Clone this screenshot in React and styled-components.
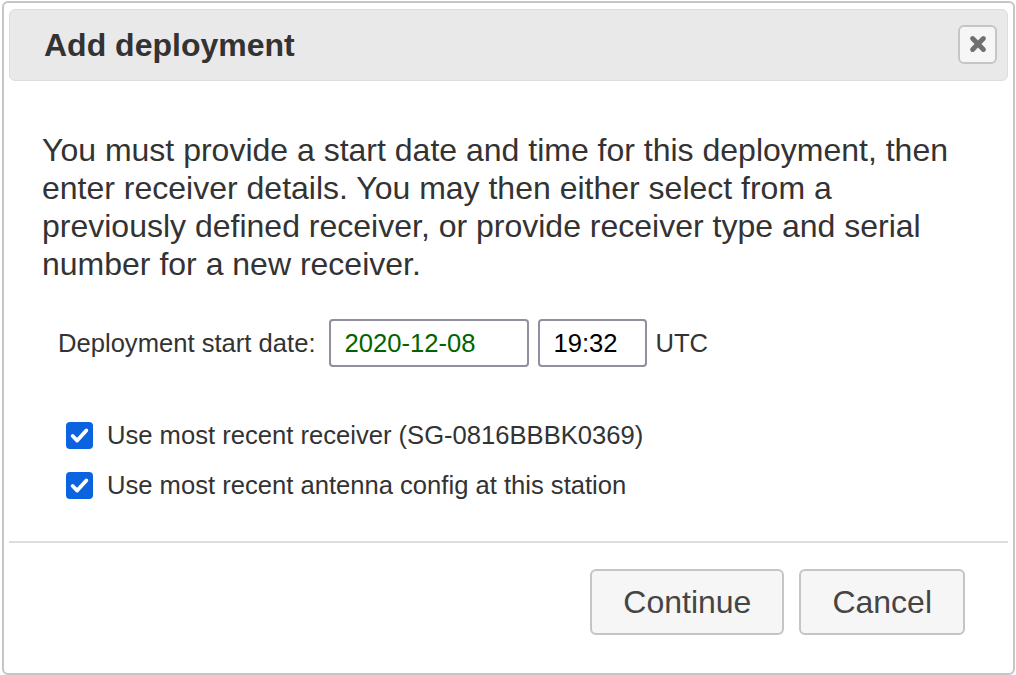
import React from "react";
import styled, { createGlobalStyle } from "styled-components";

const Global = createGlobalStyle`
  html, body { margin: 0; padding: 0; background: #fff; }
  body { font-family: "Liberation Sans", Arial, sans-serif; color: #333; }
`;

const Dialog = styled.div`
  box-sizing: border-box;
  margin: 1px 2px 0 2px;
  width: 1013px;
  height: 674px;
  border: 2px solid #c5c5c5;
  border-radius: 6px;
  padding: 6px 5px;
  display: flex;
  flex-direction: column;
  background: #fff;
`;

const TitleBar = styled.div`
  box-sizing: border-box;
  height: 72px;
  border: 1px solid #dddddd;
  border-radius: 6px;
  background: #e9e9e9;
  display: flex;
  align-items: center;
  justify-content: space-between;
  padding: 0 10px 0 34px;
`;

const Title = styled.span`
  font-size: 32px;
  font-weight: bold;
  color: #333;
`;

const CloseButton = styled.button`
  box-sizing: border-box;
  width: 39px;
  height: 39px;
  margin-top: -2px;
  border: 2px solid #c5c5c5;
  border-radius: 6px;
  background: #f6f6f6;
  display: flex;
  align-items: center;
  justify-content: center;
  padding: 0;
`;

const Body = styled.div`
  padding: 50px 33px 0 33px;
  flex: 1;
`;

const Intro = styled.p`
  margin: 0;
  font-size: 32px;
  line-height: 38px;
  color: #333;
`;

const DateRow = styled.div`
  display: flex;
  align-items: center;
  margin-top: 36px;
  padding-left: 16px;
  font-size: 25.6px;
  color: #333;
`;

const Label = styled.span`
  margin-right: 13px;
`;

const Field = styled.input`
  box-sizing: border-box;
  height: 48px;
  width: ${(p) => p.$w}px;
  border: 2px solid #8f8f9d;
  border-radius: 4px;
  padding: 0 14px;
  font-family: "Liberation Sans", Arial, sans-serif;
  font-size: 25.6px;
  color: ${(p) => p.$color || "#000"};
  margin-right: 9px;
  background: #fff;
  outline: none;
`;

const Checks = styled.div`
  margin-top: 54px;
  padding-left: 24px;
  display: flex;
  flex-direction: column;
  gap: 21px;
`;

const CheckRow = styled.label`
  display: flex;
  align-items: center;
  gap: 14px;
  font-size: 25.6px;
  color: #333;
`;

const Box = styled.span`
  width: 27px;
  height: 27px;
  border-radius: 4px;
  background: #0b63e0;
  display: flex;
  align-items: center;
  justify-content: center;
`;

const Footer = styled.div`
  border-top: 2px solid #dddddd;
  padding: 26px 43px 0 0;
  height: 126px;
  box-sizing: border-box;
  display: flex;
  align-items: flex-start;
  justify-content: flex-end;
  gap: 15px;
`;

const Button = styled.button`
  box-sizing: border-box;
  height: 66px;
  padding: 0 31px;
  border: 2px solid #c5c5c5;
  border-radius: 6px;
  background: #f6f6f6;
  font-family: "Liberation Sans", Arial, sans-serif;
  font-size: 32px;
  color: #454545;
`;

const Check = () => (
  <Box>
    <svg width="21" height="21" viewBox="0 0 20 20">
      <path d="M3.5 10.5 L7.8 14.8 L16.5 5.2" fill="none" stroke="#fff" strokeWidth="3.6" strokeLinecap="round" strokeLinejoin="round" />
    </svg>
  </Box>
);

export default function App() {
  return (
    <>
      <Global />
      <Dialog>
        <TitleBar>
          <Title>Add deployment</Title>
          <CloseButton aria-label="close">
            <svg width="18" height="18" viewBox="0 0 16 16">
              <path d="M3.2 3.2 L12.8 12.8 M12.8 3.2 L3.2 12.8" stroke="#707070" strokeWidth="4.4" strokeLinecap="round" />
            </svg>
          </CloseButton>
        </TitleBar>
        <Body>
          <Intro>
            You must provide a start date and time for this deployment, then enter receiver details. You may then either select from a previously defined receiver, or provide receiver type and serial number for a new receiver.
          </Intro>
          <DateRow>
            <Label>Deployment start date:</Label>
            <Field $w={200} $color="#006400" defaultValue="2020-12-08" />
            <Field $w={109} defaultValue="19:32" />
            <span>UTC</span>
          </DateRow>
          <Checks>
            <CheckRow><Check />Use most recent receiver (SG-0816BBBK0369)</CheckRow>
            <CheckRow><Check />Use most recent antenna config at this station</CheckRow>
          </Checks>
        </Body>
        <Footer>
          <Button>Continue</Button>
          <Button>Cancel</Button>
        </Footer>
      </Dialog>
    </>
  );
}
